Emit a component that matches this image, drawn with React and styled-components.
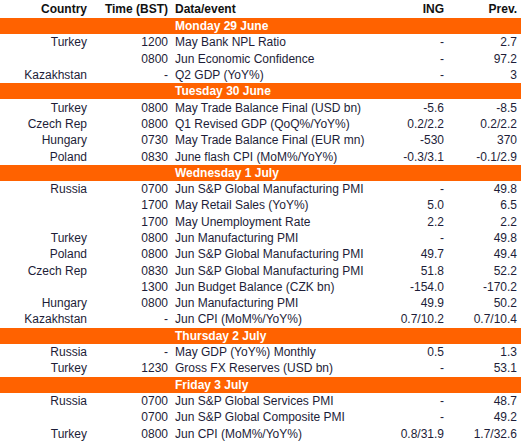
import React from 'react';
import styled, { createGlobalStyle } from 'styled-components';

const GlobalStyle = createGlobalStyle`
  html, body {
    margin: 0;
    padding: 0;
    background: #fff;
  }
  body {
    font-family: 'Liberation Sans', Arial, sans-serif;
  }
`;

const days = [
  {
    day: 'Monday 29 June',
    rows: [
      ['Turkey', '1200', 'May Bank NPL Ratio', '-', '2.7'],
      ['', '0800', 'Jun Economic Confidence', '-', '97.2'],
      ['Kazakhstan', '-', 'Q2 GDP (YoY%)', '-', '3'],
    ],
  },
  {
    day: 'Tuesday 30 June',
    rows: [
      ['Turkey', '0800', 'May Trade Balance Final (USD bn)', '-5.6', '-8.5'],
      ['Czech Rep', '0800', 'Q1 Revised GDP (QoQ%/YoY%)', '0.2/2.2', '0.2/2.2'],
      ['Hungary', '0730', 'May Trade Balance Final (EUR mn)', '-530', '370'],
      ['Poland', '0830', 'June flash CPI (MoM%/YoY%)', '-0.3/3.1', '-0.1/2.9'],
    ],
  },
  {
    day: 'Wednesday 1 July',
    rows: [
      ['Russia', '0700', 'Jun S&P Global Manufacturing PMI', '-', '49.8'],
      ['', '1700', 'May Retail Sales (YoY%)', '5.0', '6.5'],
      ['', '1700', 'May Unemployment Rate', '2.2', '2.2'],
      ['Turkey', '0800', 'Jun Manufacturing PMI', '-', '49.8'],
      ['Poland', '0800', 'Jun S&P Global Manufacturing PMI', '49.7', '49.4'],
      ['Czech Rep', '0830', 'Jun S&P Global Manufacturing PMI', '51.8', '52.2'],
      ['', '1300', 'Jun Budget Balance (CZK bn)', '-154.0', '-170.2'],
      ['Hungary', '0800', 'Jun Manufacturing PMI', '49.9', '50.2'],
      ['Kazakhstan', '-', 'Jun CPI (MoM%/YoY%)', '0.7/10.2', '0.7/10.4'],
    ],
  },
  {
    day: 'Thursday 2 July',
    rows: [
      ['Russia', '-', 'May GDP (YoY%) Monthly', '0.5', '1.3'],
      ['Turkey', '1230', 'Gross FX Reserves (USD bn)', '-', '53.1'],
    ],
  },
  {
    day: 'Friday 3 July',
    rows: [
      ['Russia', '0700', 'Jun S&P Global Services PMI', '-', '48.7'],
      ['', '0700', 'Jun S&P Global Composite PMI', '-', '49.2'],
      ['Turkey', '0800', 'Jun CPI (MoM%/YoY%)', '0.8/31.9', '1.7/32.6'],
    ],
  },
];

const App = () => {
  return (
    <>
      <GlobalStyle />
      <Styled.Table>
        <Styled.Row $head>
          <Styled.Cell $right>Country</Styled.Cell>
          <Styled.Cell $right>Time (BST)</Styled.Cell>
          <Styled.Cell $event>Data/event</Styled.Cell>
          <Styled.Cell $right>ING</Styled.Cell>
          <Styled.Cell $right>Prev.</Styled.Cell>
        </Styled.Row>
        {days.map((d) => (
          <React.Fragment key={d.day}>
            <Styled.Band>
              <Styled.BandLabel>{d.day}</Styled.BandLabel>
            </Styled.Band>
            {d.rows.map((r, i) => (
              <Styled.Row key={i}>
                <Styled.Cell $right>{r[0]}</Styled.Cell>
                <Styled.Cell $right>{r[1]}</Styled.Cell>
                <Styled.Cell $event>{r[2]}</Styled.Cell>
                <Styled.Cell $right>{r[3]}</Styled.Cell>
                <Styled.Cell $right>{r[4]}</Styled.Cell>
              </Styled.Row>
            ))}
          </React.Fragment>
        ))}
      </Styled.Table>
    </>
  );
};

const columns = '87px 81px minmax(0, 1fr) 90px 73px';

const Styled = {
  Table: styled.div`
    width: 521px;
    display: flex;
    flex-direction: column;
    font-size: 12px;
    color: #1d1d38;
  `,
  Row: styled.div`
    display: grid;
    grid-template-columns: ${columns};
    height: ${({ $head }) => ($head ? '18px' : '16.3px')};
    padding-right: 4px;
    align-items: center;
    font-weight: ${({ $head }) => ($head ? 700 : 400)};
    color: ${({ $head }) => ($head ? '#111' : 'inherit')};
  `,
  Cell: styled.div`
    min-width: 0;
    text-align: ${({ $right }) => ($right ? 'right' : 'left')};
    padding-left: ${({ $event }) => ($event ? '7px' : '0')};
    white-space: nowrap;
    line-height: 1;
  `,
  Band: styled.div`
    display: grid;
    grid-template-columns: ${columns};
    height: 16.3px;
    padding-right: 4px;
    align-items: center;
    background: #ff6200;
    color: #fff;
    font-weight: 700;
  `,
  BandLabel: styled.div`
    grid-column: 3 / 6;
    padding-left: 7px;
    line-height: 1;
    white-space: nowrap;
  `,
};

export default App;
